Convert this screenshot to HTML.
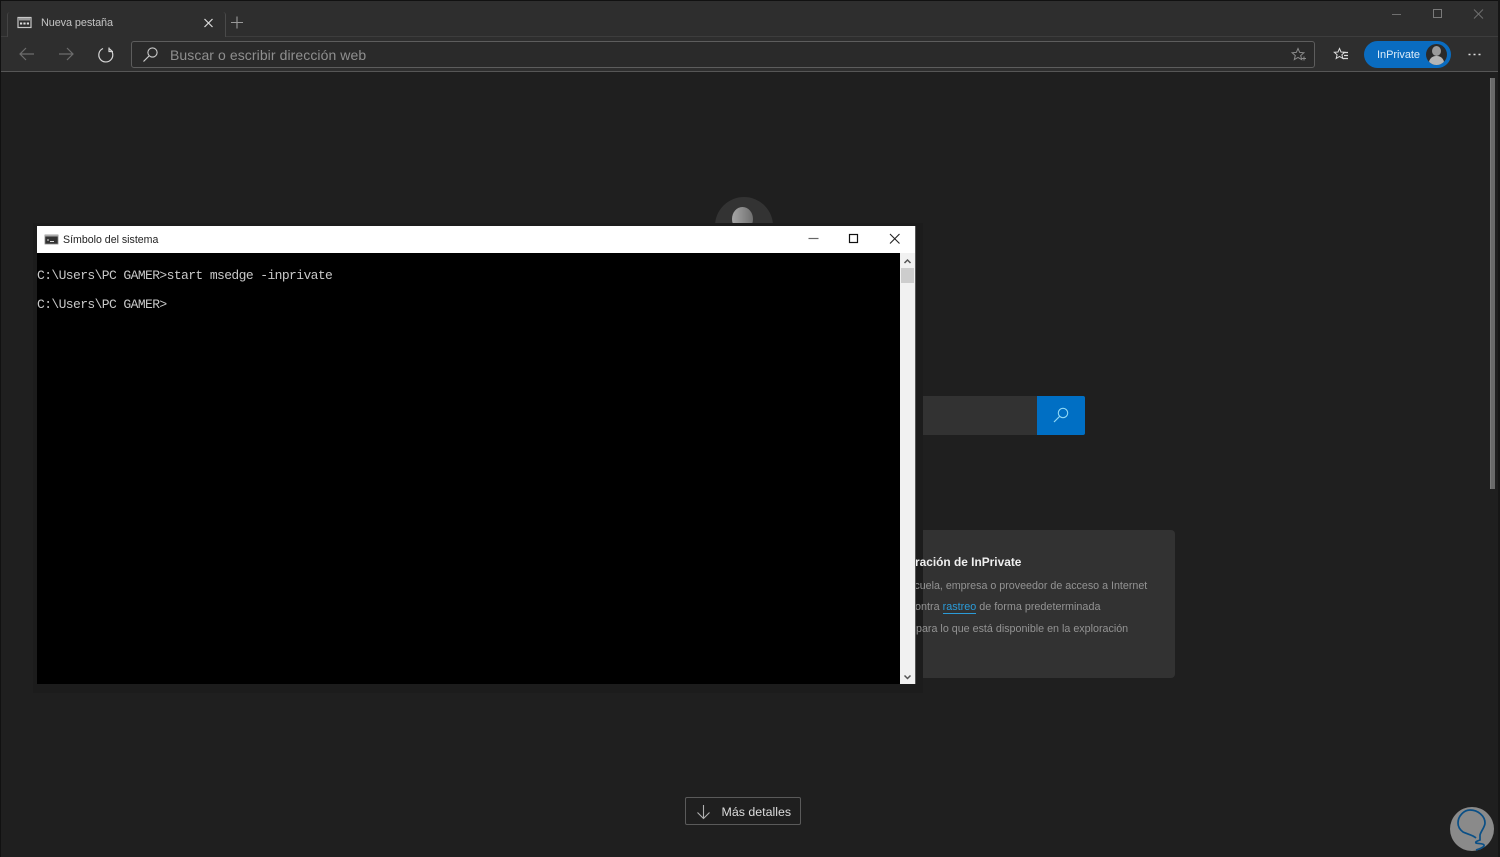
<!DOCTYPE html>
<html lang="es"><head><meta charset="utf-8"><title>Nueva pestaña</title>
<style>
html,body{margin:0;padding:0;width:1500px;height:857px;overflow:hidden;background:#1f1f1f;font-family:"Liberation Sans",sans-serif}
.a{position:absolute}
svg{position:absolute;overflow:visible}
.t{position:absolute;white-space:nowrap}
.m{font-family:"Liberation Mono",monospace;font-size:13px;letter-spacing:-.6px;color:#c8c8c8;white-space:pre;position:absolute;left:37px}
</style></head><body>
<div class="a" style="left:0;top:0;width:1500px;height:857px;background:#1f1f1f"></div>
<!-- browser chrome -->
<div class="a" style="left:0;top:0;width:1500px;height:72px;background:#2e2e2e;border-top:1px solid #111;box-sizing:border-box"></div>
<div class="a" style="left:0;top:36px;width:1500px;height:1px;background:#3d3d3d"></div>
<div class="a" style="left:0;top:71px;width:1500px;height:1px;background:#565656"></div>
<div class="a" style="left:0;top:0;width:1px;height:857px;background:#111"></div>
<div class="a" style="left:1498px;top:0;width:2px;height:857px;background:#161616"></div>
<!-- tab -->
<div class="a" style="left:7px;top:12px;width:217px;height:25px;background:#2e2e2e;border-right:1px solid #4a4a4a;border-left:1px solid #444;border-radius:3px 3px 0 0"></div>
<svg style="left:0;top:0" width="260" height="72" fill="none">
<rect x="18" y="17.5" width="13" height="10" stroke="#c8c8c8" stroke-width="1.2"/>
<rect x="19" y="18" width="11" height="2.5" fill="#999"/>
<path d="M20 23.5h2.2M23.4 23.5h2.2M26.8 23.5h2.2" stroke="#ddd" stroke-width="2"/>
<path d="M204.5 19l8 8M212.5 19l-8 8" stroke="#ddd" stroke-width="1.2"/>
<path d="M237 16.5v12M231 22.5h12" stroke="#9a9a9a" stroke-width="1.1"/>
<path d="M34 54H20M26 48l-6 6 6 6" stroke="#6d6d6d" stroke-width="1.2"/>
<path d="M59 54h14M67 48l6 6-6 6" stroke="#6d6d6d" stroke-width="1.2"/>
<path d="M103 48.5a7 7 0 1 0 6 .2M109 47.5v4h4" stroke="#d5d5d5" stroke-width="1.2"/>
</svg>
<div class="t" style="left:41px;top:16.5px;font-size:10.9px;color:#c4c4c4;letter-spacing:-.1px">Nueva pestaña</div>
<!-- address -->
<div class="a" style="left:131px;top:41px;width:1184px;height:27px;box-sizing:border-box;border:1px solid #5d5d5d;border-radius:3px;background:#2a2a2a"></div>
<svg style="left:0;top:0" width="1500" height="72" fill="none">
<circle cx="152.5" cy="52.5" r="4.6" stroke="#ccc" stroke-width="1.1"/>
<path d="M149 56l-5.5 5.5" stroke="#ccc" stroke-width="1.2"/>
<path d="M1298 48.5l1.7 3.9 4.2.4-3.200 2.700 1 4.100-3.700-2.200-3.700 2.200 1-4.100-3.200-2.700 4.200-.4z" stroke="#8a8a8a" stroke-width="1"/>
<path d="M1302 58.500h4M1304 56.500v4" stroke="#8a8a8a"/>
<path d="M1339.500 48.500l1.500 3.500 3.700.3-2.800 2.500.9 3.700-3.300-2-3.300 2 .9-3.700-2.800-2.500 3.700-.3z" stroke="#ddd" stroke-width="1"/>
<path d="M1343 52.500h5M1344 55.500h4M1343 58.500h5" stroke="#ddd" stroke-width="1.200"/>
<path d="M1392 14.500h9" stroke="#6f6f6f" stroke-width="1"/>
<rect x="1433.500" y="9.500" width="8" height="8" stroke="#7a7a7a" stroke-width="1"/>
<path d="M1474 9.500l9 9M1483 9.500l-9 9" stroke="#6f6f6f" stroke-width="1"/>
<path d="M1468.500 54.500h2M1473.500 54.500h2M1478.500 54.500h2" stroke="#ddd" stroke-width="1.500"/>
</svg>
<div class="t" style="left:170px;top:46.500px;font-size:14px;color:#8f8f8f;letter-spacing:.08px">Buscar o escribir dirección web</div>
<!-- InPrivate -->
<div class="a" style="left:1364px;top:41px;width:87px;height:27px;border-radius:14px;background:#0a6cc0"></div>
<div class="t" style="left:1377px;top:48.500px;font-size:11px;color:#dcecf8;letter-spacing:-.05px">InPrivate</div>
<div class="a" style="left:1426px;top:44px;width:21px;height:21px;border-radius:50%;background:#2a2a2a;overflow:hidden">
<div class="a" style="left:6px;top:2px;width:9px;height:10px;border-radius:50%;background:#9a9a9a"></div>
<div class="a" style="left:3px;top:12px;width:15px;height:10px;border-radius:7px 7px 0 0;background:#b5b5b5"></div>
</div>
<!-- scrollbar -->
<div class="a" style="left:1490px;top:78px;width:5px;height:411px;background:#6a6a6a;border-left:1px solid #7c7c7c;box-sizing:border-box"></div>
<!-- avatar -->
<div class="a" style="left:715px;top:197px;width:58px;height:58px;border-radius:50%;background:#333"></div>
<div class="a" style="left:732px;top:207px;width:21px;height:24px;border-radius:50%;background:linear-gradient(90deg,#a5a5a5,#8b8b8b 50%,#6f6f6f)"></div>
<!-- search -->
<div class="a" style="left:915px;top:396px;width:122px;height:39px;background:#323232"></div>
<div class="a" style="left:1037px;top:396px;width:48px;height:39px;background:#006fc4;border-radius:0 2px 2px 0"></div>
<svg style="left:0;top:0" width="1500" height="500" fill="none">
<circle cx="1063" cy="413" r="4.700" stroke="#8fd8f5" stroke-width="1.100"/>
<path d="M1059.500 416.500l-5.500 5.500" stroke="#8fd8f5" stroke-width="1.200"/>
</svg>
<!-- card -->
<div class="a" style="left:900px;top:530px;width:275px;height:148px;background:#323232;border-radius:4px"></div>
<!-- window shadow -->
<div class="a" style="left:33px;top:223px;width:890px;height:470px;background:#1c1c1c"></div>
<div class="t" style="left:915px;top:554.500px;font-size:11.900px;font-weight:bold;color:#f0f0f0">ración de InPrivate</div>
<div class="t" style="left:909px;top:580px;font-size:10.700px;color:#939393">scuela, empresa o proveedor de acceso a Internet</div>
<div class="t" style="left:915px;top:601px;font-size:10.800px;color:#939393">ontra <span style="color:#2b9bd8;border-bottom:1px solid #2b9bd8">rastreo</span> de forma predeterminada</div>
<div class="t" style="left:916px;top:623px;font-size:10.730px;color:#939393">para lo que está disponible en la exploración</div>
<!-- cmd window -->
<div class="a" style="left:37px;top:226px;width:878px;height:458px;background:#000;border-right:1px solid #555"></div>
<div class="a" style="left:37px;top:226px;width:878px;height:27px;background:#fff"></div>
<svg style="left:0;top:0" width="1000" height="700" fill="none">
<rect x="45" y="235" width="13" height="9" fill="#333" stroke="#888" stroke-width=".8"/>
<rect x="45" y="235" width="13" height="1.500" fill="#aaa"/>
<path d="M47 240h2M50 241.500h4" stroke="#ddd"/>
<path d="M808.500 238.500h10" stroke="#666" stroke-width="1.200"/>
<rect x="849.500" y="234.500" width="8" height="8" stroke="#111" stroke-width="1.200"/>
<path d="M890 234l9.500 9.500M899.500 234l-9.500 9.500" stroke="#222" stroke-width="1.100"/>
</svg>
<div class="t" style="left:63px;top:233.500px;font-size:10.600px;color:#222">Símbolo del sistema</div>
<div class="m" style="top:267.500px">C:\Users\PC GAMER&gt;start msedge -inprivate</div>
<div class="m" style="top:296.500px">C:\Users\PC GAMER&gt;</div>
<!-- cmd scrollbar -->
<div class="a" style="left:900px;top:253px;width:15px;height:431px;background:#f1f1f1"></div>
<div class="a" style="left:901px;top:268px;width:13px;height:15px;background:#cdcdcd"></div>
<svg style="left:0;top:0" width="1000" height="700" fill="none">
<path d="M904.500 263l3-3 3 3" stroke="#555" stroke-width="1.500"/>
<path d="M904.500 675.500l3 3 3-3" stroke="#555" stroke-width="1.500"/>
</svg>
<!-- Más detalles -->
<div class="a" style="left:685px;top:797px;width:116px;height:28px;box-sizing:border-box;border:1px solid #5a5a5a;border-radius:2px"></div>
<svg style="left:0;top:0" width="800" height="857" fill="none">
<path d="M703.500 805v13.500M697.500 812.500l6 6 6-6" stroke="#b0b0b0" stroke-width="1.100"/>
</svg>
<div class="t" style="left:721.500px;top:804.500px;font-size:12.400px;color:#dcdcdc">Más detalles</div>
<!-- watermark -->
<div class="a" style="left:1450px;top:807px;width:44px;height:44px;border-radius:50%;background:#8a8a8a"></div>
<svg style="left:0;top:0" width="1500" height="857" fill="none">
<path d="M1476 838c-3-3-9-4-13-6-4-3-5-6-5-9 0-7 6-13 12-13 8 0 15 6 15 13 0 4-4 8-5 12 0 2 0 5 0 5-3 1-5 2-4 3 2 1 7 0 8 2 1 2-5 4-8 5" stroke="#0a4f86" stroke-width="1.700"/>
</svg>
</body></html>
